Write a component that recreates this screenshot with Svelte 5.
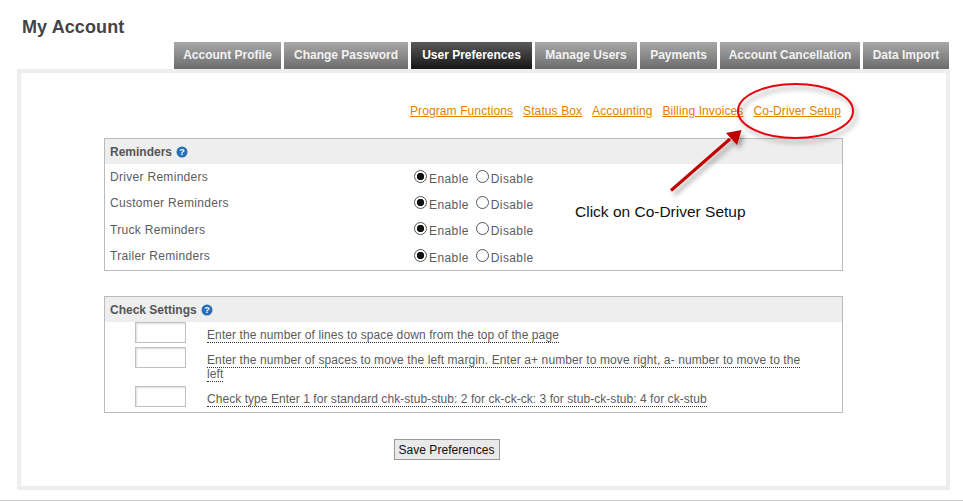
<script>
  const tabs = [
    { name: 'Account Profile' },
    { name: 'Change Password' },
    { name: 'User Preferences', active: true },
    { name: 'Manage Users' },
    { name: 'Payments' },
    { name: 'Account Cancellation' },
    { name: 'Data Import' }
  ];
  const links = ['Program Functions', 'Status Box', 'Accounting', 'Billing Invoices', 'Co-Driver Setup'];
  const reminders = ['Driver Reminders', 'Customer Reminders', 'Truck Reminders', 'Trailer Reminders'];
  const checks = [
    'Enter the number of lines to space down from the top of the page',
    'Enter the number of spaces to move the left margin. Enter a+ number to move right, a- number to move to the left',
    'Check type Enter 1 for standard chk-stub-stub: 2 for ck-ck-ck: 3 for stub-ck-stub: 4 for ck-stub'
  ];
</script>

<div class="page">
  <h1>My Account</h1>
  <nav class="tabs">
    {#each tabs as tab}
      <span class="tab" class:active={tab.active}>{tab.name}</span>
    {/each}
  </nav>

  <div class="panel">
    <div class="links">
      {#each links as link}
        <a href="#top">{link}</a>
      {/each}
    </div>

    <section class="box reminders">
      <header>
        Reminders
        <svg class="help" width="12" height="12" viewBox="0 0 12 12">
          <circle cx="6" cy="6" r="5.5" fill="#2a6db5" />
          <text x="6" y="9.4" text-anchor="middle">?</text>
        </svg>
      </header>
      {#each reminders as name, i}
        <div class="row">
          <span class="label">{name}</span>
          <span class="choices">
            <label><input type="radio" name={'r' + i} checked />Enable</label>
            <label><input type="radio" name={'r' + i} />Disable</label>
          </span>
        </div>
      {/each}
    </section>

    <section class="box settings">
      <header>
        Check Settings
        <svg class="help" width="12" height="12" viewBox="0 0 12 12">
          <circle cx="6" cy="6" r="5.5" fill="#2a6db5" />
          <text x="6" y="9.4" text-anchor="middle">?</text>
        </svg>
      </header>
      {#each checks as text}
        <div class="check">
          <input type="text" />
          <p><span>{text}</span></p>
        </div>
      {/each}
    </section>

    <div class="actions">
      <button type="button">Save Preferences</button>
    </div>
  </div>
  <div class="rule"></div>

  <!-- callout drawn over the screenshot -->
  <svg class="callout" width="963" height="501" viewBox="0 0 963 501">
    <defs>
      <filter id="shade" x="-20%" y="-20%" width="150%" height="150%">
        <feDropShadow dx="3" dy="4" stdDeviation="2.5" flood-color="#000" flood-opacity="0.35" />
      </filter>
    </defs>
    <g filter="url(#shade)">
      <ellipse cx="795.5" cy="111" rx="57.5" ry="27" fill="none" stroke="#e8000f" stroke-width="2" />
      <path d="M671 190.5L730 139" stroke="#c00000" stroke-width="3" fill="none" />
      <path d="M741.5 130L726 133L737 145Z" fill="#c00000" />
    </g>
  </svg>
  <span class="note">Click on Co-Driver Setup</span>
</div>

<style>
  :global(body) {
    background: #fff;
  }
  .page {
    position: relative;
    width: 963px;
    height: 501px;
    overflow: hidden;
    font-family: "Liberation Sans", Arial, sans-serif;
    font-size: 12px;
    color: #5c5c5c;
  }
  h1 {
    margin: 0;
    padding: 17px 0 0 22px;
    height: 25px;
    font-size: 18px;
    line-height: 21px;
    letter-spacing: 0.1px;
    color: #444;
  }
  .tabs {
    display: grid;
    grid-template-columns: 107px 124px 121px 102px 77px 140px 86px;
    gap: 3px;
    height: 27px;
    padding-left: 174px;
  }
  .tab {
    text-align: center;
    line-height: 26px;
    font-size: 12px;
    font-weight: bold;
    color: #f2f2f2;
    background: linear-gradient(#a8a8a8, #6c6c6c);
  }
  .tab.active {
    background: linear-gradient(#5a5a5a, #161616);
    color: #fff;
  }
  .panel {
    box-sizing: border-box;
    width: 933px;
    height: 421px;
    margin-left: 17px;
    border: 4px solid #eee;
    padding: 0 83px;
  }
  .links {
    display: flex;
    justify-content: flex-end;
    gap: 10px;
    height: 65px;
    padding: 30px 22px 0 0;
    box-sizing: border-box;
    line-height: 16px;
    letter-spacing: 0.1px;
  }
  a {
    color: #e67e00;
    text-decoration: underline;
  }
  .box {
    box-sizing: border-box;
    width: 739px;
    border: 1px solid #bbb;
  }
  .box header {
    display: flex;
    align-items: center;
    gap: 4px;
    height: 25px;
    padding-left: 5px;
    background: #eee;
    font-weight: bold;
    color: #555;
  }
  .help text {
    font: bold 9px "Liberation Sans", Arial, sans-serif;
    fill: #fff;
  }
  .reminders {
    height: 133px;
  }
  .row {
    display: grid;
    grid-template-columns: 304px auto;
    align-items: center;
    height: 26.3px;
    padding-left: 5px;
  }
  .label {
    letter-spacing: 0.3px;
  }
  .choices {
    display: flex;
    gap: 7px;
    padding-top: 3px;
    letter-spacing: 0.4px;
  }
  .choices label {
    display: flex;
    align-items: center;
  }
  input[type="radio"] {
    appearance: none;
    box-sizing: border-box;
    width: 13px;
    height: 13px;
    margin: -5px 2px 0 0;
    border: 1px solid #555;
    border-radius: 50%;
    background: #fff;
  }
  input[type="radio"]:checked {
    background: radial-gradient(circle, #111 3.4px, #fff 4px);
  }
  .settings {
    height: 117px;
    margin-top: 25px;
  }
  .check {
    display: flex;
    align-items: flex-start;
    padding-left: 30px;
    margin-bottom: 4px;
  }
  .check:last-child {
    margin-top: 2px;
  }
  .check input {
    flex: none;
    box-sizing: border-box;
    width: 51px;
    height: 21px;
    margin: 0 21px 0 0;
    border: 1px solid #c0c0c0;
    box-shadow: inset 1px 1px 2px #ddd;
    background: #fff;
  }
  .check p {
    margin: 6px 0 1px;
    width: 596px;
    line-height: 14px;
    letter-spacing: 0.1px;
  }
  .check:last-child p {
    letter-spacing: 0.05px;
  }
  .check p span {
    border-bottom: 1px dotted #333;
  }
  .actions {
    display: flex;
    justify-content: center;
    box-sizing: border-box;
    width: 739px;
    margin-top: 26px;
    padding-right: 54px;
  }
  button {
    box-sizing: border-box;
    width: 106px;
    height: 21px;
    padding: 0;
    border: 1px solid #999;
    background: #e9e9e9;
    color: #111;
    font: 12px "Liberation Sans", Arial, sans-serif;
    letter-spacing: 0.05px;
  }
  .rule {
    height: 1px;
    margin-top: 10px;
    background: #ccc;
  }
  .callout {
    position: absolute;
    left: 0;
    top: 0;
    pointer-events: none;
  }
  .note {
    position: absolute;
    left: 575px;
    top: 203px;
    font-size: 15.5px;
    line-height: 18px;
    color: #111;
  }
</style>
